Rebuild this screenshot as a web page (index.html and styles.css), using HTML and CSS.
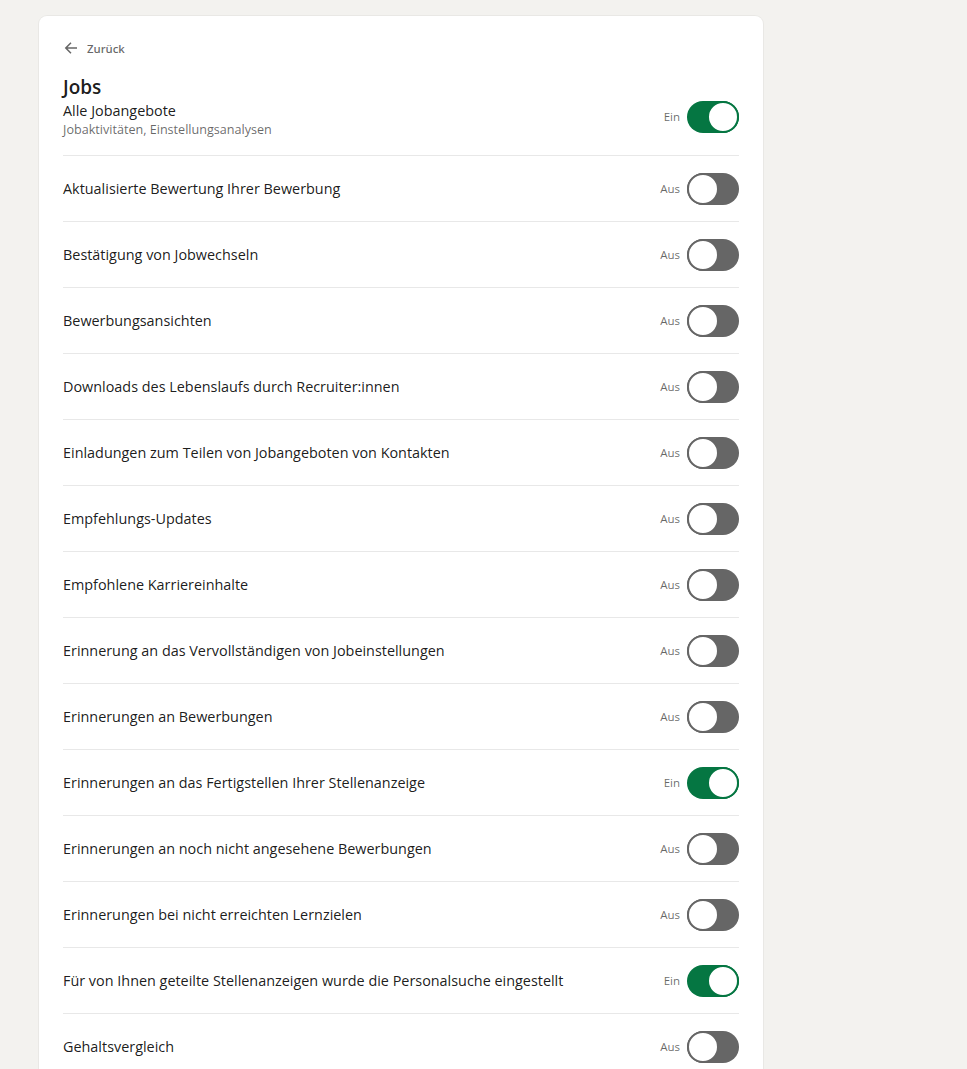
FILE: index.html
```html
<!DOCTYPE html>
<html lang="de">
<head>
<meta charset="utf-8">
<link rel="stylesheet" href="styles.css">
</head>
<body>
<main class="card">
  <a class="back" href="#">
    <svg class="back-icon" viewBox="0 0 16 16" width="16" height="16"><path d="M14 7.25H4.6l3.9-3.9-1.06-1.06L1.73 8l5.71 5.71 1.06-1.06-3.9-3.9H14z" fill="currentColor"/></svg>
    <span>Zurück</span>
  </a>
  <h1 class="title">Jobs</h1>
  <div class="head-row">
    <div class="head-text">
      <div class="head-label">Alle Jobangebote</div>
      <div class="head-sub">Jobaktivitäten, Einstellungsanalysen</div>
    </div>
    <div class="switch-wrap"><span class="state">Ein</span><span class="switch on"><span class="knob"></span></span></div>
  </div>
  <ul class="list">
    <li class="row"><span class="label">Aktualisierte Bewertung Ihrer Bewerbung</span><div class="switch-wrap"><span class="state">Aus</span><span class="switch"><span class="knob"></span></span></div></li>
    <li class="row"><span class="label">Bestätigung von Jobwechseln</span><div class="switch-wrap"><span class="state">Aus</span><span class="switch"><span class="knob"></span></span></div></li>
    <li class="row"><span class="label">Bewerbungsansichten</span><div class="switch-wrap"><span class="state">Aus</span><span class="switch"><span class="knob"></span></span></div></li>
    <li class="row"><span class="label">Downloads des Lebenslaufs durch Recruiter:innen</span><div class="switch-wrap"><span class="state">Aus</span><span class="switch"><span class="knob"></span></span></div></li>
    <li class="row"><span class="label">Einladungen zum Teilen von Jobangeboten von Kontakten</span><div class="switch-wrap"><span class="state">Aus</span><span class="switch"><span class="knob"></span></span></div></li>
    <li class="row"><span class="label">Empfehlungs-Updates</span><div class="switch-wrap"><span class="state">Aus</span><span class="switch"><span class="knob"></span></span></div></li>
    <li class="row"><span class="label">Empfohlene Karriereinhalte</span><div class="switch-wrap"><span class="state">Aus</span><span class="switch"><span class="knob"></span></span></div></li>
    <li class="row"><span class="label">Erinnerung an das Vervollständigen von Jobeinstellungen</span><div class="switch-wrap"><span class="state">Aus</span><span class="switch"><span class="knob"></span></span></div></li>
    <li class="row"><span class="label">Erinnerungen an Bewerbungen</span><div class="switch-wrap"><span class="state">Aus</span><span class="switch"><span class="knob"></span></span></div></li>
    <li class="row"><span class="label">Erinnerungen an das Fertigstellen Ihrer Stellenanzeige</span><div class="switch-wrap"><span class="state">Ein</span><span class="switch on"><span class="knob"></span></span></div></li>
    <li class="row"><span class="label">Erinnerungen an noch nicht angesehene Bewerbungen</span><div class="switch-wrap"><span class="state">Aus</span><span class="switch"><span class="knob"></span></span></div></li>
    <li class="row"><span class="label">Erinnerungen bei nicht erreichten Lernzielen</span><div class="switch-wrap"><span class="state">Aus</span><span class="switch"><span class="knob"></span></span></div></li>
    <li class="row"><span class="label">Für von Ihnen geteilte Stellenanzeigen wurde die Personalsuche eingestellt</span><div class="switch-wrap"><span class="state">Ein</span><span class="switch on"><span class="knob"></span></span></div></li>
    <li class="row"><span class="label">Gehaltsvergleich</span><div class="switch-wrap"><span class="state">Aus</span><span class="switch"><span class="knob"></span></span></div></li>
  </ul>
</main>
</body>
</html>
```
FILE: styles.css
```css
* { box-sizing: border-box; }
html, body { margin: 0; padding: 0; }
body {
  background: #f3f2ef;
  font-family: "Open Sans", "Noto Sans", sans-serif;
  color: rgba(0,0,0,0.9);
  padding: 16px 0 0 39px;
  height: 1069px;
  overflow: hidden;
}
.card {
  width: 724px;
  background: #fff;
  border-radius: 8px;
  padding: 24px 24px 0;
  box-shadow: 0 0 0 1px rgba(0,0,0,0.04);
}
.back {
  display: flex;
  align-items: center;
  gap: 8px;
  height: 16px;
  color: rgba(0,0,0,0.6);
  text-decoration: none;
  font-size: 11.3px;
  font-weight: 600;
}
.back-icon { color: rgba(0,0,0,0.6); }
.title {
  margin: 17px 0 0;
  font-size: 19px;
  line-height: 28px;
  font-weight: 600;
}
.head-row {
  display: flex;
  align-items: center;
  justify-content: space-between;
  padding: 0 0 17px;
  border-bottom: 1px solid #e8e8e8;
}
.head-label { font-size: 14.4px; line-height: 20px; }
.head-sub { font-size: 12.6px; line-height: 17px; color: rgba(0,0,0,0.6); }
.head-row .switch-wrap { margin-top: -6px; }
.list { list-style: none; margin: 0; padding: 0; }
.row {
  display: flex;
  align-items: center;
  justify-content: space-between;
  height: 66px;
  border-bottom: 1px solid #e8e8e8;
}
.label { font-size: 14.4px; line-height: 20px; }
.switch-wrap { display: flex; align-items: center; gap: 7px; }
.state { font-size: 11.5px; color: rgba(0,0,0,0.6); }
.switch {
  position: relative;
  width: 52px;
  height: 32px;
  border-radius: 16px;
  background: #666;
}
.knob {
  position: absolute;
  top: 0;
  left: 0;
  width: 32px;
  height: 32px;
  border-radius: 50%;
  background: #fff;
  border: 2px solid #666;
}
.switch.on { background: #057642; }
.switch.on .knob { left: 20px; border-color: #057642; }
```
